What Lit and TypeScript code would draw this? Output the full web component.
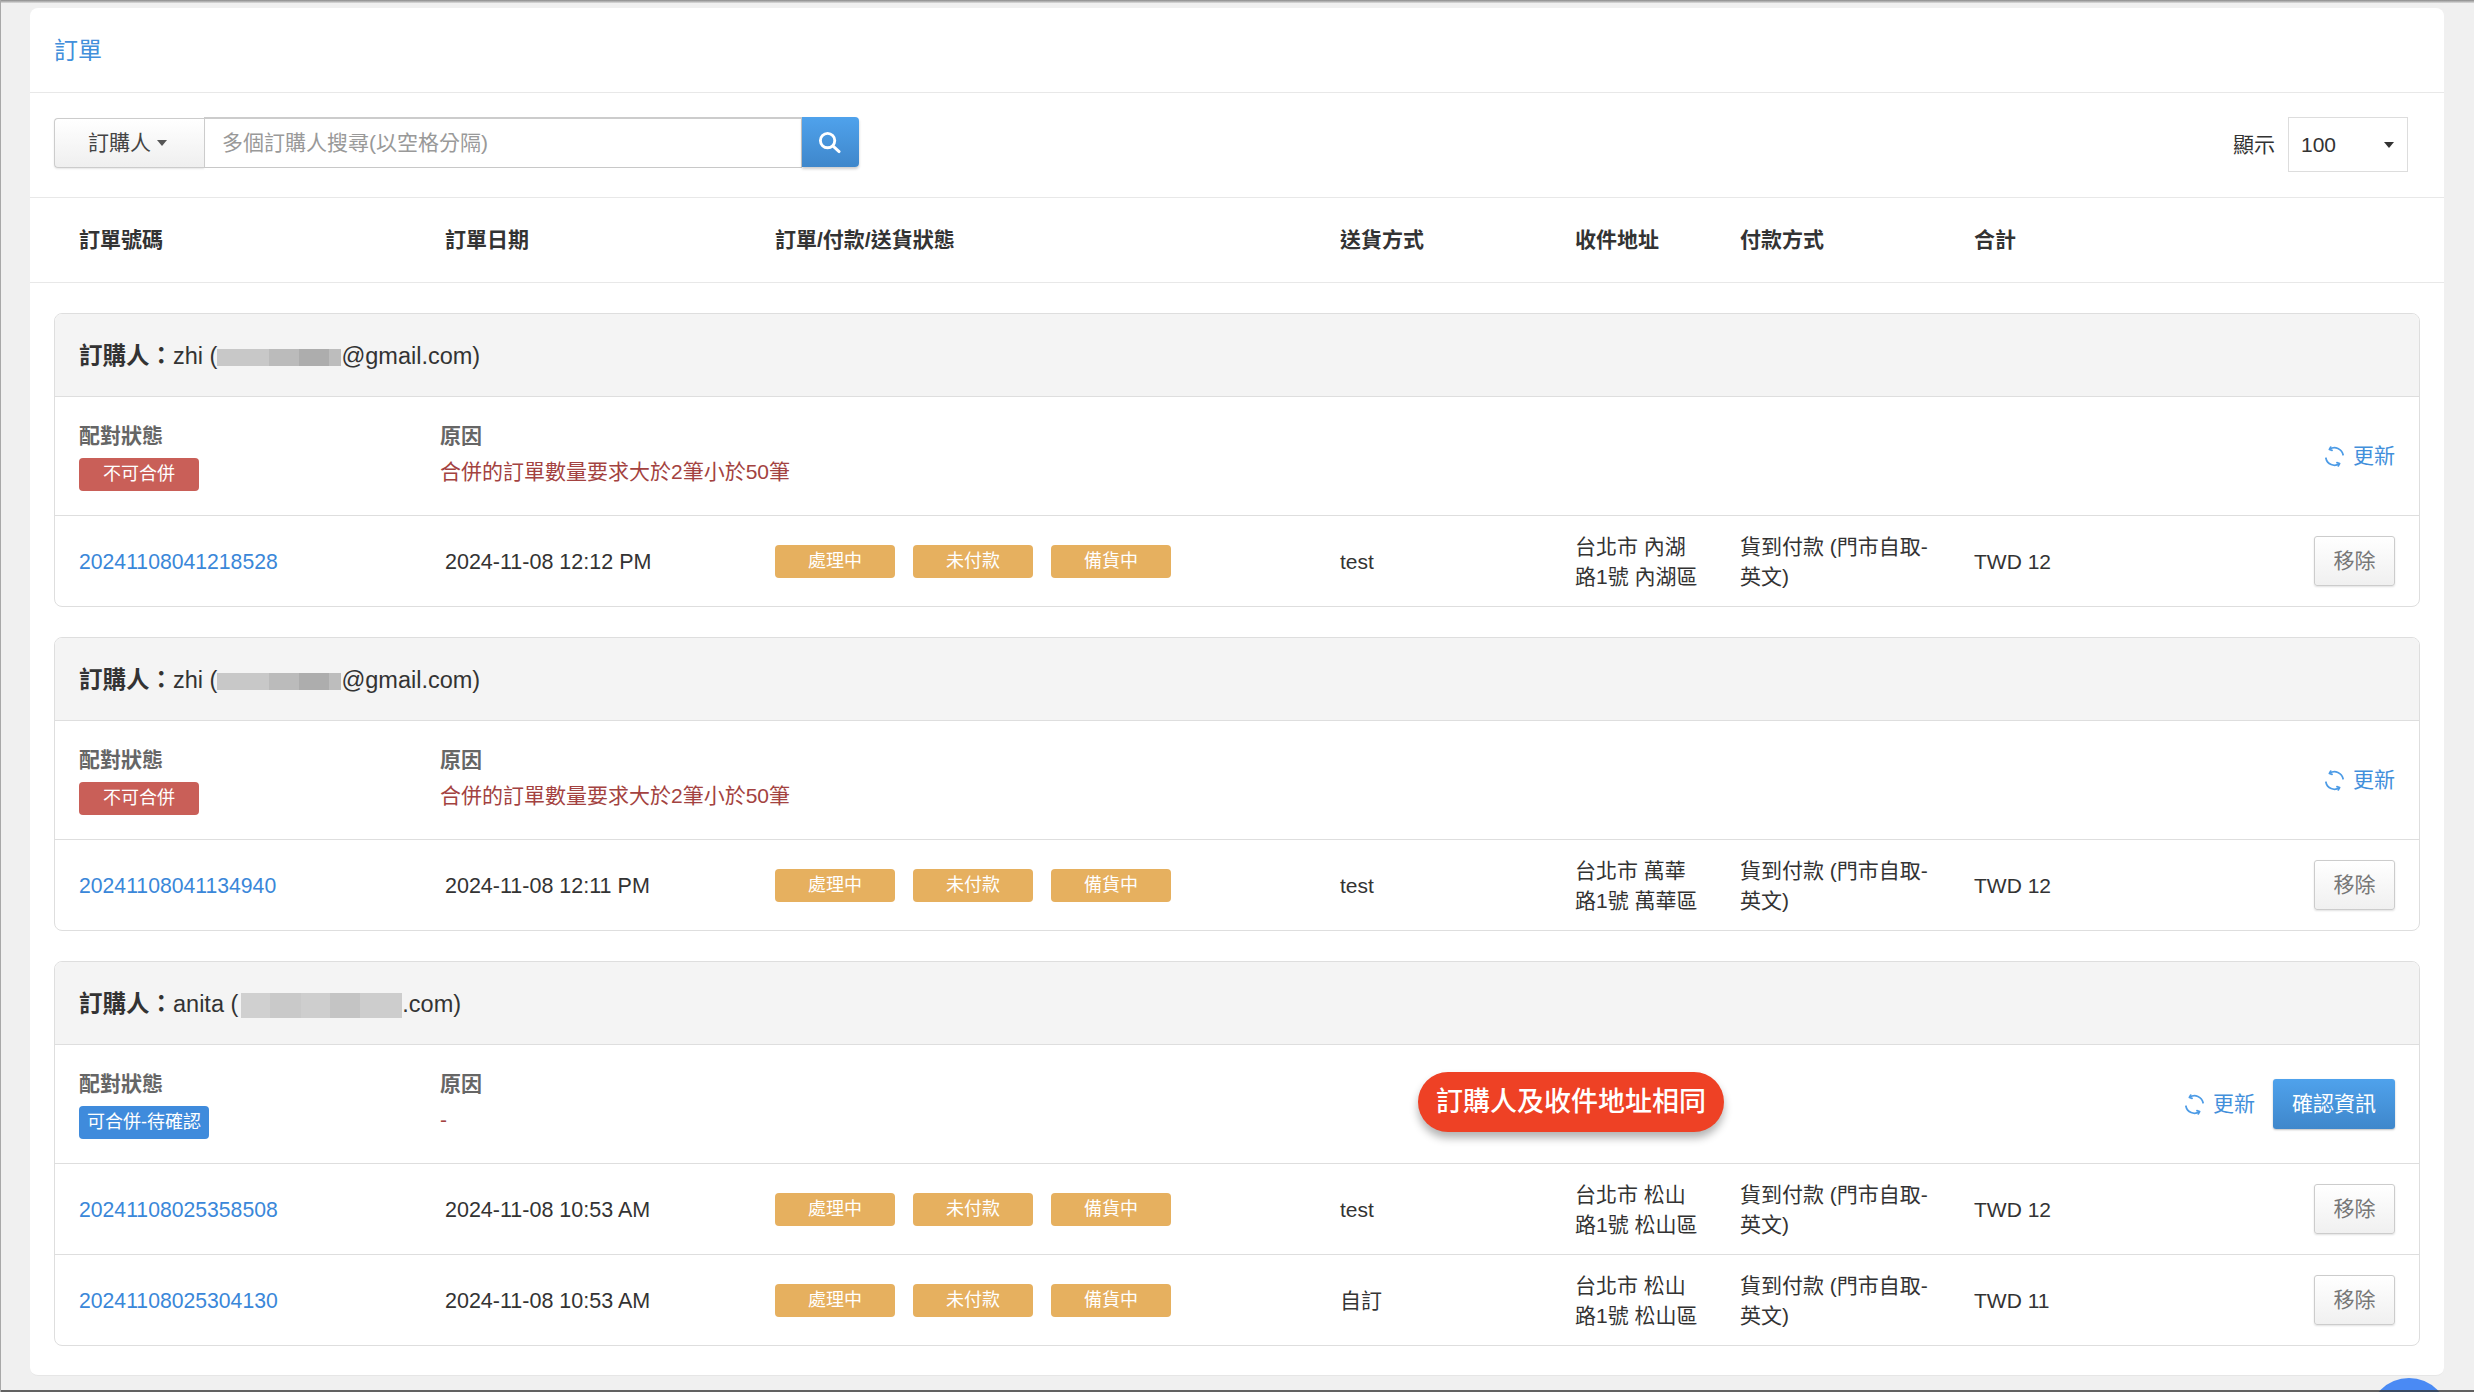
import { LitElement, html, css, nothing } from 'lit';
import { customElement } from 'lit/decorators.js';

interface Order {
  no: string;
  date: string;
  ship: string;
  addr: string;
  total: string;
}

interface Group {
  name: string;
  blur: string;
  suffix: string;
  mergeable: boolean;
  reason: string;
  orders: Order[];
}

const PAY = '貨到付款 (門市自取-英文)';

const GROUPS: Group[] = [
  {
    name: 'zhi (', blur: 'blur-a', suffix: '@gmail.com)', mergeable: false,
    reason: '合併的訂單數量要求大於2筆小於50筆',
    orders: [{ no: '20241108041218528', date: '2024-11-08 12:12 PM', ship: 'test', addr: '台北市 內湖路1號 內湖區', total: 'TWD 12' }]
  },
  {
    name: 'zhi (', blur: 'blur-a', suffix: '@gmail.com)', mergeable: false,
    reason: '合併的訂單數量要求大於2筆小於50筆',
    orders: [{ no: '20241108041134940', date: '2024-11-08 12:11 PM', ship: 'test', addr: '台北市 萬華路1號 萬華區', total: 'TWD 12' }]
  },
  {
    name: 'anita (', blur: 'blur-b', suffix: '.com)', mergeable: true,
    reason: '-',
    orders: [
      { no: '20241108025358508', date: '2024-11-08 10:53 AM', ship: 'test', addr: '台北市 松山路1號 松山區', total: 'TWD 12' },
      { no: '20241108025304130', date: '2024-11-08 10:53 AM', ship: '自訂', addr: '台北市 松山路1號 松山區', total: 'TWD 11' }
    ]
  }
];

const refreshIcon = html`<svg class="refresh" viewBox="0 0 24 24" fill="none" stroke="currentColor" stroke-width="2" stroke-linecap="round" stroke-linejoin="round">
  <path d="M6.6 3.6A10 10 0 0 1 21.8 10" />
  <path d="M17.4 20.4A10 10 0 0 1 2.2 14" />
  <path d="M7.6 1.2 6.2 4l3 .9" />
  <path d="M16.4 22.8l1.4-2.8-3-.9" />
</svg>`;

@customElement('app-root')
export class AppRoot extends LitElement {
  static styles = css`
    :host {
      display: block;
      position: relative;
      height: 1392px;
      overflow: hidden;
      background: #f0f0f0;
      font-family: "Liberation Sans", "Noto Sans CJK TC", sans-serif;
      font-size: 21px;
      line-height: 30px;
      color: #333;
    }

    .card {
      box-sizing: border-box;
      margin: 8px 30px 0;
      height: 1368px;
      background: #fff;
      border-radius: 8px;
      border-bottom: 1px solid #e6e6e6;
    }

    .title {
      box-sizing: border-box;
      height: 85px;
      padding: 28px 0 0 24px;
      font-size: 24px;
      color: #428fdb;
      border-bottom: 1px solid #e8e8e8;
    }

    .toolbar {
      box-sizing: border-box;
      height: 105px;
      display: flex;
      padding: 24px 36px 0 24px;
      border-bottom: 1px solid #e8e8e8;
    }

    .picker {
      box-sizing: border-box;
      width: 150px;
      height: 50px;
      margin-top: 1px;
      display: flex;
      align-items: center;
      gap: 6px;
      padding-left: 33px;
      background: linear-gradient(#fff, #efefef);
      border: 1px solid #ccc;
      border-right: none;
      border-radius: 4px 0 0 4px;
      box-shadow: 0 1px 2px rgba(0, 0, 0, 0.1);
      color: #444;
    }

    .caret {
      width: 0;
      height: 0;
      border-left: 5.5px solid transparent;
      border-right: 5.5px solid transparent;
      border-top: 6px solid #555;
    }

    .search {
      box-sizing: border-box;
      width: 598px;
      height: 51px;
      padding: 9px 0 0 17px;
      border: 1px solid #ccc;
      border-width: 2px 1px 1px;
      border-bottom-color: #c8c8c8;
      color: #999;
    }

    .go {
      width: 57px;
      height: 50px;
      display: flex;
      align-items: center;
      justify-content: center;
      padding-right: 3px;
      box-sizing: border-box;
      background: linear-gradient(#4fa2ec, #3f87cb);
      border-radius: 0 4px 4px 0;
      box-shadow: 0 2px 3px rgba(0, 0, 0, 0.2);
    }

    .go svg {
      width: 23px;
      height: 23px;
    }

    .show {
      margin-left: auto;
      display: flex;
      gap: 13px;
      height: 55px;
      line-height: 55px;
    }

    .select {
      box-sizing: border-box;
      width: 120px;
      height: 55px;
      display: flex;
      align-items: center;
      justify-content: space-between;
      padding: 0 13px 0 12px;
      border: 1px solid #ddd;
    }

    .select .caret {
      border-top-color: #333;
    }

    .cols {
      display: grid;
      grid-template-columns: 366px 330px 565px 235px 165px 234px 1fr auto;
      align-items: center;
    }

    .head {
      box-sizing: border-box;
      height: 85px;
      padding-left: 49px;
      font-weight: 700;
      border-bottom: 1px solid #e8e8e8;
    }

    .groups {
      display: flex;
      flex-direction: column;
      gap: 30px;
      padding: 30px 24px 0;
    }

    .group {
      border: 1px solid #dedede;
      border-radius: 8px;
      overflow: hidden;
    }

    .buyer {
      box-sizing: border-box;
      height: 83px;
      display: flex;
      align-items: center;
      padding: 1px 0 0 24px;
      font-size: 23.5px;
      background: #f4f4f4;
      border-bottom: 1px solid #dedede;
      white-space: pre;
    }

    .buyer b {
      font-weight: 700;
    }

    .blur-a {
      width: 124px;
      height: 17px;
      margin-top: 3px;
      background: linear-gradient(90deg, #c8c8c8 0 42%, #bbb 42% 66%, #adadad 66% 90%, #bdbdbd 90%);
    }

    .blur-b {
      width: 161px;
      height: 25px;
      margin: 4px 0 0 3px;
      background: linear-gradient(90deg, #d0d0d0 0 18%, #c9c9c9 18% 37%, #cecece 37% 55%, #c4c4c4 55% 74%, #cdcdcd 74%);
    }

    .info {
      position: relative;
      box-sizing: border-box;
      height: 119px;
      display: flex;
      padding: 24px 24px 0;
      border-bottom: 1px solid #dedede;
    }

    .info .match {
      width: 361px;
    }

    .label {
      font-weight: 700;
      color: #666;
    }

    .reason {
      margin-top: 6px;
      color: #a34240;
    }

    .tag {
      display: inline-block;
      box-sizing: border-box;
      height: 33px;
      line-height: 33px;
      text-align: center;
      font-size: 18px;
      color: #fff;
      border-radius: 4px;
    }

    .tag.red {
      width: 120px;
      margin-top: 7px;
      background: #c95f58;
    }

    .tag.blue {
      width: 130px;
      margin-top: 7px;
      background: #3f8bdc;
    }

    .tag.orange {
      width: 120px;
      background: #e6b05f;
    }

    .actions {
      margin: -24px 0 0 auto;
      display: flex;
      align-items: center;
      gap: 18px;
    }

    .update {
      display: flex;
      align-items: center;
      gap: 8px;
      color: #428fdb;
    }

    .refresh {
      width: 21px;
      height: 21px;
      color: #4c9be6;
    }

    .confirm {
      width: 122px;
      height: 50px;
      line-height: 50px;
      text-align: center;
      color: #fff;
      background: linear-gradient(#4fa2ec, #3f87cb);
      border-radius: 3px;
      box-shadow: 0 1px 2px rgba(0, 0, 0, 0.25);
    }

    .note {
      position: absolute;
      left: 1363px;
      top: 27px;
      height: 60px;
      line-height: 61px;
      padding: 0 18px;
      font-size: 27px;
      font-weight: 500;
      color: #fff;
      background: #ee4125;
      border-radius: 30px;
      box-shadow: 0 6px 9px rgba(0, 0, 0, 0.3);
    }

    .order {
      height: 90px;
      padding: 0 24px;
    }

    .order + .order {
      border-top: 1px solid #dedede;
    }

    .order a {
      color: #3a87d9;
      font-size: 21.2px;
      text-decoration: none;
    }

    .cell {
      padding-top: 1px;
    }

    .date {
      font-size: 21.5px;
    }

    .status {
      display: flex;
      gap: 18px;
    }

    .addr {
      width: 128px;
    }

    .pay {
      width: 190px;
    }

    .remove {
      box-sizing: border-box;
      width: 81px;
      height: 50px;
      line-height: 48px;
      text-align: center;
      color: #777;
      background: linear-gradient(#fff, #f0f0f0);
      border: 1px solid #ccc;
      border-radius: 3px;
      box-shadow: 0 1px 2px rgba(0, 0, 0, 0.12);
    }

    .bubble {
      position: absolute;
      left: 2369px;
      top: 1378px;
      width: 80px;
      height: 80px;
      border-radius: 50%;
      background: #4a8af4;
    }

    .edge-top,
    .edge-bottom,
    .edge-left {
      position: absolute;
      left: 0;
      right: 0;
    }

    .edge-top {
      top: 0;
      height: 3px;
      background: linear-gradient(#8a8a8a, #dcdcdc);
    }

    .edge-bottom {
      bottom: 0;
      height: 2px;
      background: rgba(50, 50, 50, 0.75);
    }

    .edge-left {
      top: 0;
      bottom: 0;
      right: auto;
      width: 1px;
      background: #a8a8a8;
    }
  `;

  private renderOrder(o: Order) {
    return html`
      <div class="cols order">
        <div class="cell"><a href="#">${o.no}</a></div>
        <div class="cell date">${o.date}</div>
        <div class="status">
          <span class="tag orange">處理中</span>
          <span class="tag orange">未付款</span>
          <span class="tag orange">備貨中</span>
        </div>
        <div class="cell">${o.ship}</div>
        <div class="cell addr">${o.addr}</div>
        <div class="cell pay">${PAY}</div>
        <div class="cell">${o.total}</div>
        <div class="remove">移除</div>
      </div>
    `;
  }

  private renderGroup(g: Group) {
    return html`
      <section class="group">
        <div class="buyer"><b>訂購人：</b>${g.name}<span class=${g.blur}></span>${g.suffix}</div>
        <div class="info">
          <div class="match">
            <div class="label">配對狀態</div>
            ${g.mergeable
              ? html`<span class="tag blue">可合併-待確認</span>`
              : html`<span class="tag red">不可合併</span>`}
          </div>
          <div>
            <div class="label">原因</div>
            <div class="reason">${g.reason}</div>
          </div>
          ${g.mergeable ? html`<div class="note">訂購人及收件地址相同</div>` : nothing}
          <div class="actions">
            <div class="update">${refreshIcon}更新</div>
            ${g.mergeable ? html`<div class="confirm">確認資訊</div>` : nothing}
          </div>
        </div>
        ${g.orders.map((o) => this.renderOrder(o))}
      </section>
    `;
  }

  render() {
    return html`
      <div class="card">
        <div class="title">訂單</div>
        <div class="toolbar">
          <div class="picker">訂購人<span class="caret"></span></div>
          <div class="search">多個訂購人搜尋(以空格分隔)</div>
          <div class="go">
            <svg viewBox="0 0 24 24" fill="none" stroke="#fff" stroke-width="3" stroke-linecap="round">
              <circle cx="10" cy="10" r="7.5" />
              <path d="M15.5 15.5 22 21.5" />
            </svg>
          </div>
          <div class="show">
            顯示
            <div class="select">100<span class="caret"></span></div>
          </div>
        </div>
        <div class="cols head">
          <div>訂單號碼</div>
          <div>訂單日期</div>
          <div>訂單/付款/送貨狀態</div>
          <div>送貨方式</div>
          <div>收件地址</div>
          <div>付款方式</div>
          <div>合計</div>
        </div>
        <div class="groups">${GROUPS.map((g) => this.renderGroup(g))}</div>
      </div>
      <div class="bubble"></div>
      <div class="edge-top"></div>
      <div class="edge-bottom"></div>
      <div class="edge-left"></div>
    `;
  }
}
